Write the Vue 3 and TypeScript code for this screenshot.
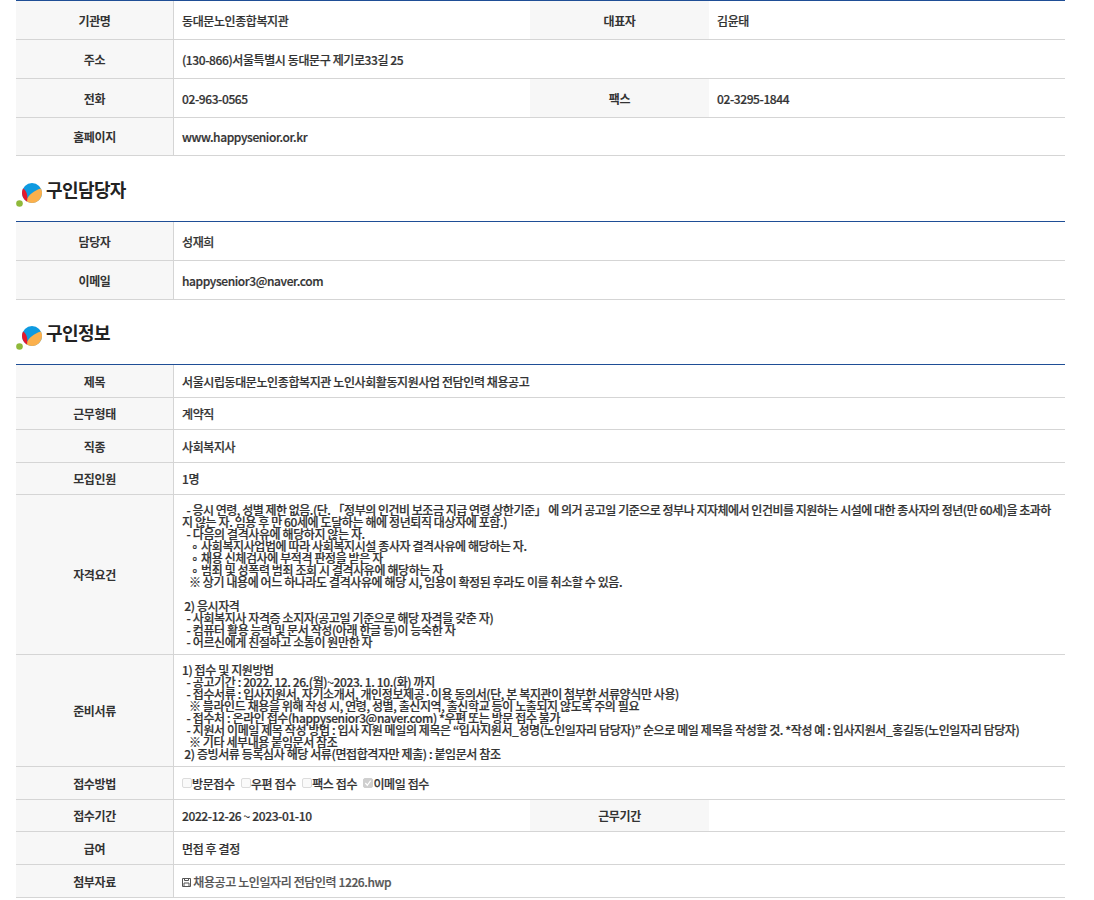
<script setup lang="ts">
const qualLead = `  - 응시 연령, 성별 제한 없음.(단. 「정부의 인건비 보조금 지급 연령 상한기준」 에 의거 공고일 기준으로 정부나 지자체에서 인건비를 지원하는 시설에 대한 종사자의 정년(만 60세)을 초과하`
const qual = `지 않는 자. 임용 후 만 60세에 도달하는 해에 정년퇴직 대상자에 포함.)
  - 다음의 결격사유에 해당하지 않는 자.
    ∘ 사회복지사업법에 따라 사회복지시설 종사자 결격사유에 해당하는 자.
    ∘ 채용 신체검사에 부적격 판정을 받은 자
    ∘ 범죄 및 성폭력 범죄 조회 시 결격사유에 해당하는 자
   ※ 상기 내용에 어느 하나라도 결격사유에 해당 시, 임용이 확정된 후라도 이를 취소할 수 있음.

 2) 응시자격
  - 사회복지사 자격증 소지자(공고일 기준으로 해당 자격을 갖춘 자)
  - 컴퓨터 활용 능력 및 문서 작성(아래 한글 등)이 능숙한 자
  - 어르신에게 친절하고 소통이 원만한 자`
const docs = `1) 접수 및 지원방법
  - 공고기간 : 2022. 12. 26.(월)~2023. 1. 10.(화) 까지
  - 접수서류 : 입사지원서, 자기소개서, 개인정보제공·이용 동의서(단, 본 복지관이 첨부한 서류양식만 사용)
   ※ 블라인드 채용을 위해 작성 시, 연령, 성별, 출신지역, 출신학교 등이 노출되지 않도록 주의 필요
  - 접수처 : 온라인 접수(happysenior3@naver.com) *우편 또는 방문 접수 불가
  - 지원서 이메일 제목 작성 방법 : 입사 지원 메일의 제목은 “입사지원서_성명(노인일자리 담당자)” 순으로 메일 제목을 작성할 것. *작성 예 : 입사지원서_홍길동(노인일자리 담당자)
   ※ 기타 세부내용 붙임문서 참조
 2) 증빙서류 등록심사 해당 서류(면접합격자만 제출) : 붙임문서 참조`
const methods = [
  { label: '방문접수', checked: false },
  { label: '우편 접수', checked: false },
  { label: '팩스 접수', checked: false },
  { label: '이메일 접수', checked: true },
]
</script>

<template>
  <div class="page">
    <table class="info first">
      <colgroup><col class="c1" /><col class="c2" /><col class="c3" /><col /></colgroup>
      <tbody>
        <tr><th>기관명</th><td>동대문노인종합복지관</td><th class="side">대표자</th><td>김윤태</td></tr>
        <tr><th>주소</th><td colspan="3">(130-866)서울특별시 동대문구 제기로33길 25</td></tr>
        <tr><th>전화</th><td>02-963-0565</td><th class="side">팩스</th><td>02-3295-1844</td></tr>
        <tr><th>홈페이지</th><td colspan="3">www.happysenior.or.kr</td></tr>
      </tbody>
    </table>

    <h2 class="heading">
      <svg class="mark" width="32" height="26" viewBox="0 0 32 26" aria-hidden="true">
        <circle cx="3.5" cy="22.5" r="3.3" fill="#8fb93a" />
        <circle cx="16" cy="12" r="10" fill="#0f9ae0" />
        <path d="M25 7.6 A10 10 0 0 1 10 20 C12.5 14 18 9.5 25 7.6 Z" fill="#fbb04c" />
        <path d="M7 7.5 C10.5 9.5 12 14 11 20.6 C8 19 6 15.5 6 12 C6 10.5 6.3 9 7 7.5 Z" fill="#e6172c" />
      </svg>
      구인담당자
    </h2>

    <table class="info contact">
      <colgroup><col class="c1" /><col /></colgroup>
      <tbody>
        <tr><th>담당자</th><td>성재희</td></tr>
        <tr><th>이메일</th><td>happysenior3@naver.com</td></tr>
      </tbody>
    </table>

    <h2 class="heading second">
      <svg class="mark" width="32" height="26" viewBox="0 0 32 26" aria-hidden="true">
        <circle cx="3.5" cy="22.5" r="3.3" fill="#8fb93a" />
        <circle cx="16" cy="12" r="10" fill="#0f9ae0" />
        <path d="M25 7.6 A10 10 0 0 1 10 20 C12.5 14 18 9.5 25 7.6 Z" fill="#fbb04c" />
        <path d="M7 7.5 C10.5 9.5 12 14 11 20.6 C8 19 6 15.5 6 12 C6 10.5 6.3 9 7 7.5 Z" fill="#e6172c" />
      </svg>
      구인정보
    </h2>

    <table class="info posting">
      <colgroup><col class="c1" /><col class="c2" /><col class="c3" /><col /></colgroup>
      <tbody>
        <tr><th>제목</th><td colspan="3">서울시립동대문노인종합복지관 노인사회활동지원사업 전담인력 채용공고</td></tr>
        <tr><th>근무형태</th><td colspan="3">계약직</td></tr>
        <tr><th>직종</th><td colspan="3">사회복지사</td></tr>
        <tr><th>모집인원</th><td colspan="3">1명</td></tr>
        <tr class="r-qual"><th>자격요건</th><td colspan="3" class="long qual"><span class="tight">{{ qualLead }}</span>{{ qual }}</td></tr>
        <tr class="r-docs"><th>준비서류</th><td colspan="3" class="long docs">{{ docs }}</td></tr>
        <tr>
          <th>접수방법</th>
          <td colspan="3">
            <div class="methods">
              <span v-for="m in methods" :key="m.label" class="method">
                <span class="box" :class="{ on: m.checked }">
                  <svg v-if="m.checked" width="8" height="8" viewBox="0 0 9 9" aria-hidden="true"><path d="M1.5 4.5 L3.7 7 L7.5 1.8" fill="none" stroke="#fff" stroke-width="1.3" /></svg>
                </span>{{ m.label }}
              </span>
            </div>
          </td>
        </tr>
        <tr><th>접수기간</th><td>2022-12-26 ~ 2023-01-10</td><th class="side">근무기간</th><td></td></tr>
        <tr><th>급여</th><td colspan="3">면접 후 결정</td></tr>
        <tr class="r-last">
          <th>첨부자료</th>
          <td colspan="3" class="file">
            <svg width="9" height="9" viewBox="0 0 9 9" aria-hidden="true"><path d="M.5.5h8v8h-8zM2.5.5v2h4v-2M2 5h5v3.5H2z" fill="none" stroke="#555" /></svg>
            채용공고 노인일자리 전담인력 1226.hwp
          </td>
        </tr>
      </tbody>
    </table>
  </div>
</template>

<style>
body { background: #fff; }
</style>

<style scoped>
.page {
  box-sizing: border-box;
  width: 1094px;
  height: 900px;
  overflow: hidden;
  padding: 0 29px 0 16px;
  font-family: "Noto Sans CJK KR", "Noto Sans", sans-serif;
  color: #333;
}
.info {
  width: 1049px;
  table-layout: fixed;
  border-collapse: separate;
  border-spacing: 0;
  border-top: 1px solid #1f4e96;
}
.c1 { width: 158px; }
.c2 { width: 356px; }
.c3 { width: 179px; }
th, td {
  border-bottom: 1px solid #d5d5d5;
  box-sizing: border-box;
  font-size: 12px;
  font-weight: 500;
  letter-spacing: -0.4px;
  color: #333;
  padding: 0;
  -webkit-text-stroke: 0.2px #333;
}
th {
  background: #f7f7f7;
  text-align: center;
  border-right: 1px solid #d5d5d5;
  font-weight: 700;
  -webkit-text-stroke: 0;
}
th.side { border-right: 0; }
td { padding-left: 8px; padding-right: 8px; }
.first tr, .contact tr { height: 39px; }
.first tr:last-child { height: 38px; }
.posting tr:nth-child(odd) { height: 33px; }
.posting tr:nth-child(even) { height: 32px; }
.posting tr.r-qual { height: 160px; }
.posting tr.r-docs { height: 112px; }
.posting tr.r-last { height: 33px; }
.long {
  white-space: pre-wrap;
  line-height: 12px;
}
.qual { padding-top: 9px; padding-bottom: 6px; }
.docs { padding-top: 9px; padding-bottom: 6px; }
.tight { letter-spacing: -0.49px; }
.heading {
  display: flex;
  align-items: center;
  height: 65px;
  margin: 0;
  font-size: 18px;
  font-weight: 700;
  letter-spacing: -0.6px;
  color: #222;
}
.heading.second { height: 64px; }
.mark { margin-top: 10px; margin-right: -2px; }
.methods { display: flex; gap: 6.4px; }
.method { display: inline-flex; align-items: center; }
.box {
  display: inline-flex;
  align-items: center;
  justify-content: center;
  width: 10px;
  height: 10px;
  box-sizing: border-box;
  border: 1px solid #dcdcdc;
  border-radius: 2px;
  background: #fafafa;
}
.box.on { background: #cfcfcf; border-color: #cfcfcf; }
.file { color: #555; -webkit-text-stroke: 0.2px #555; }
</style>
